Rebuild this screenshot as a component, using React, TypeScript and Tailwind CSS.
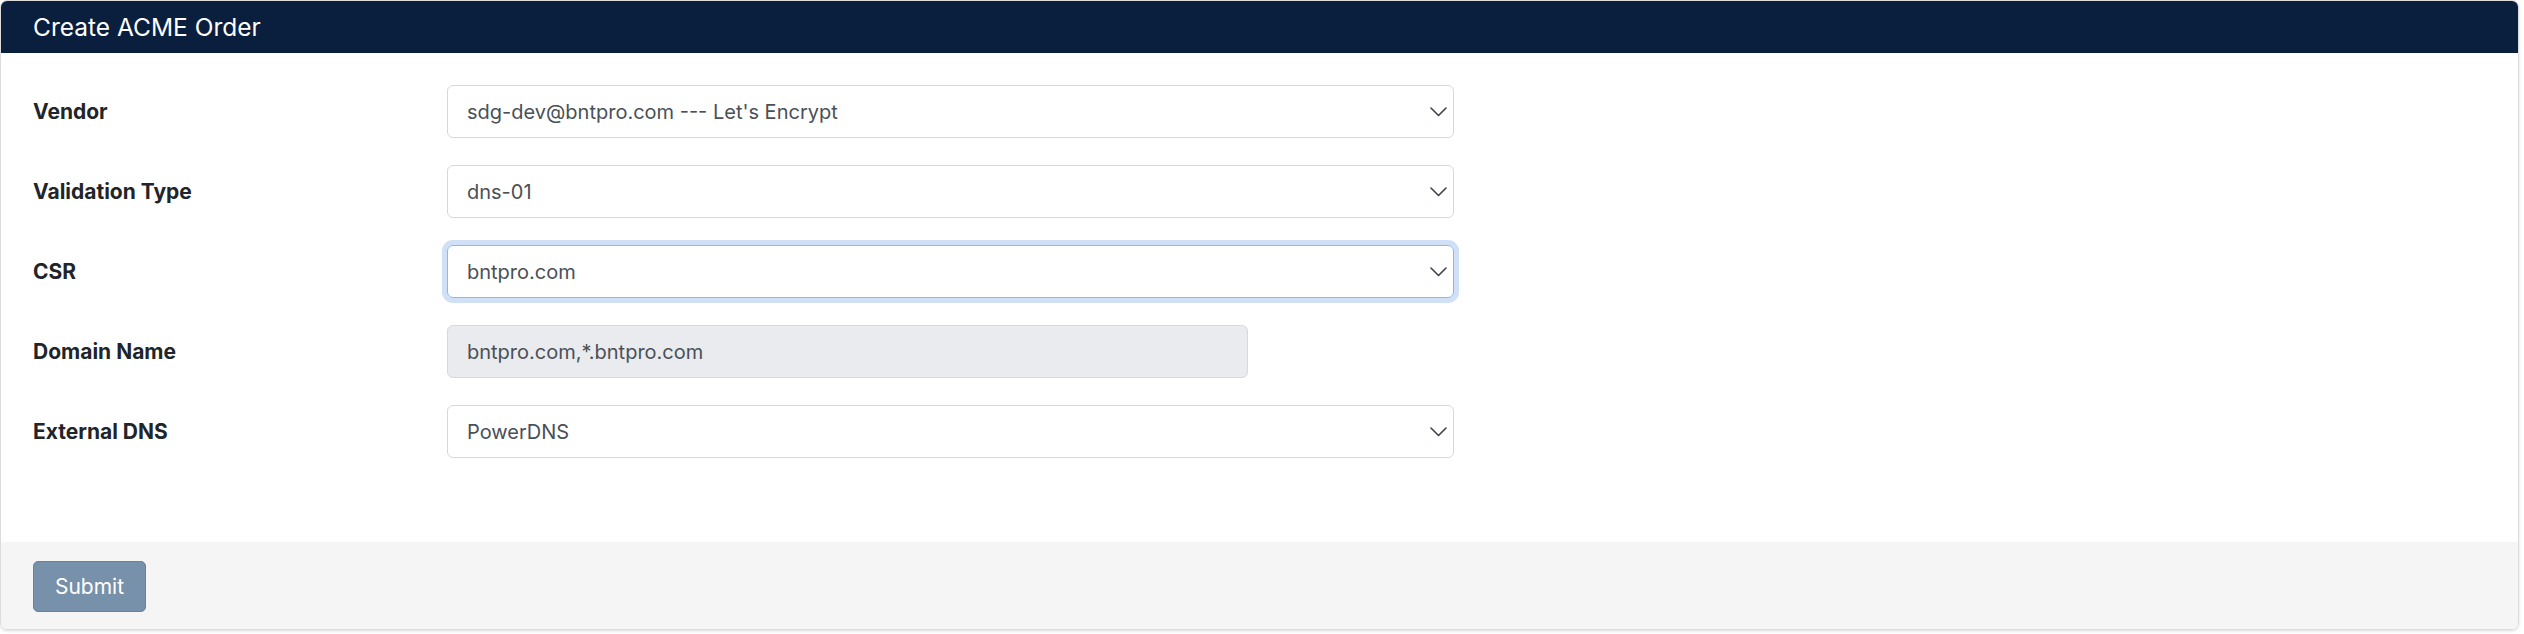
import React, { useState } from 'react';

const Chevron: React.FC = () => (
  <svg
    className="pointer-events-none absolute right-[7px] top-1/2 -translate-y-1/2"
    width="17"
    height="10"
    viewBox="0 0 17 10"
    fill="none"
  >
    <polyline points="1,1 8.5,8.5 16,1" stroke="#3d4349" strokeWidth="1.6" strokeLinecap="round" strokeLinejoin="round" />
  </svg>
);

type SelectProps = {
  value: string;
  options: string[];
  focused?: boolean;
  onChange: (v: string) => void;
};

const FieldSelect: React.FC<SelectProps> = ({ value, options, focused, onChange }) => (
  <div
    className={`relative w-[1007px] rounded-[6px] ${focused ? 'shadow-[0_0_0_5px_#d0e0f6]' : ''}`}
  >
    <select
      value={value}
      onChange={(e) => onChange(e.target.value)}
      className={`block h-[53px] w-full appearance-none rounded-[6px] border bg-white pl-[19px] pr-10 pt-[1px] text-[20px] text-[#495057] outline-none ${focused ? 'border-[#8bb6f2]' : 'border-[#d5d8dc]'}`}
    >
      {options.map((o) => (
        <option key={o} value={o}>
          {o}
        </option>
      ))}
    </select>
    <Chevron />
  </div>
);

const Row: React.FC<{ label: string; children: React.ReactNode }> = ({ label, children }) => (
  <div className="flex items-center">
    <label className="w-[414px] shrink-0 text-[21px] font-bold text-[#212529]">{label}</label>
    {children}
  </div>
);

const App: React.FC = () => {
  const [vendor, setVendor] = useState("sdg-dev@bntpro.com --- Let's Encrypt");
  const [validation, setValidation] = useState('dns-01');
  const [csr, setCsr] = useState('bntpro.com');
  const [dns, setDns] = useState('PowerDNS');

  return (
    <div className="h-[634px] bg-white" style={{ fontFamily: 'Inter, "Noto Sans", sans-serif' }}>
      <div className="mr-[5px] overflow-hidden rounded-[7px] border border-[#dcdcdc] shadow-[0_1px_3px_rgba(0,0,0,0.15)]">
        {/* Header */}
        <div className="flex h-[52px] items-center bg-[#0a1f3d] px-[32px]">
          <h1 className="text-[24.5px] font-normal text-white">Create ACME Order</h1>
        </div>

        {/* Body */}
        <div className="flex flex-col gap-[27px] bg-white px-[32px] pt-[32px] pb-[84px]">
          <Row label="Vendor">
            <FieldSelect
              value={vendor}
              onChange={setVendor}
              options={["sdg-dev@bntpro.com --- Let's Encrypt"]}
            />
          </Row>
          <Row label="Validation Type">
            <FieldSelect value={validation} onChange={setValidation} options={['dns-01', 'http-01']} />
          </Row>
          <Row label="CSR">
            <FieldSelect value={csr} onChange={setCsr} options={['bntpro.com']} focused />
          </Row>
          <Row label="Domain Name">
            <input
              disabled
              value="bntpro.com,*.bntpro.com"
              className="h-[53px] w-[801px] rounded-[6px] border border-[#d5d8dc] bg-[#e9ebee] pl-[19px] pt-[1px] text-[20px] text-[#495057]"
            />
          </Row>
          <Row label="External DNS">
            <FieldSelect value={dns} onChange={setDns} options={['PowerDNS']} />
          </Row>
        </div>

        {/* Footer */}
        <div className="bg-[#f5f5f5] px-[32px] pt-[19px] pb-[17px]">
          <button
            type="button"
            className="h-[51px] w-[113px] rounded-[5px] border border-[#6a8198] bg-[#7791aa] text-[21px] text-white"
          >
            Submit
          </button>
        </div>
      </div>
    </div>
  );
};

export default App;
